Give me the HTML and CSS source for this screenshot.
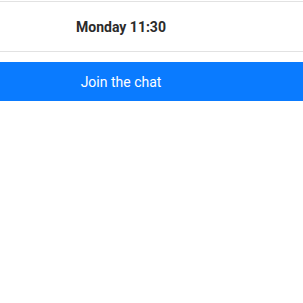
FILE: index.html
```html
<!DOCTYPE html>
<html lang="en">
<head>
    <meta charset="UTF-8">
    <meta name="viewport" content="width=device-width, initial-scale=1.0">
    <title>Chat</title>
    <link rel="stylesheet" href="styles.css">
</head>
<body>

<div class="session">
    <div class="session-time">Monday 11:30</div>
    <button type="button" class="join-btn">Join the chat</button>
</div>

</body>
</html>
```

FILE: styles.css
```css
/* General Styles */
body {
    font-family: Roboto, "Liberation Sans", sans-serif;
    margin: 0;
    padding: 1px 0 0;
    background-color: #fff;
    color: #333;
}
.session {
    display: flex;
    flex-direction: column;
}
.session-time {
    height: 49px;
    display: flex;
    align-items: center;
    justify-content: center;
    padding-right: 61px;
    border-top: 1px solid #e2e2e2;
    border-bottom: 1px solid #e2e2e2;
    font-size: 14px;
    font-weight: bold;
    color: #2b2b2b;
}
.join-btn {
    margin-top: 10px;
    height: 39px;
    padding: 0 61px 0 0;
    border: none;
    background-color: #0a7bff;
    color: white;
    font-family: inherit;
    font-size: 14px;
    cursor: pointer;
}
```
